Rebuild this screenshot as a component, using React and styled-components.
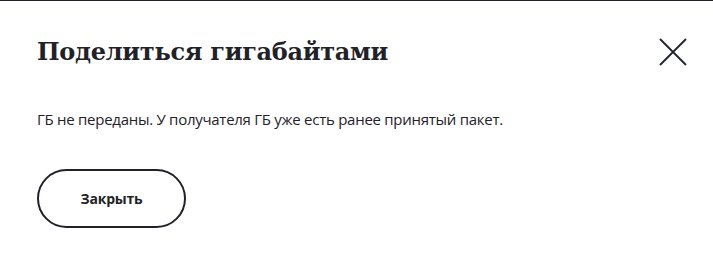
import styled, { createGlobalStyle } from "styled-components";

const GlobalStyle = createGlobalStyle`
  html, body {
    margin: 0;
    padding: 0;
    background: #ffffff;
  }
  body {
    font-family: "Open Sans", "Noto Sans", sans-serif;
    color: #1f2229;
  }
`;

const Modal = styled.div`
  box-sizing: border-box;
  width: 713px;
  height: 280px;
  border-top: 1px solid #1f2229;
  padding: 28px 24px 0 37px;
  background: #fff;
`;

const Header = styled.div`
  display: flex;
  align-items: flex-start;
  justify-content: space-between;
`;

const Title = styled.h2`
  margin: 8px 0 0;
  font-family: "DejaVu Serif", "Liberation Serif", serif;
  font-weight: 700;
  font-size: 24px;
  letter-spacing: -0.3px;
  line-height: 30px;
  color: #1f2229;
`;

const CloseButton = styled.button`
  display: flex;
  align-items: center;
  justify-content: center;
  width: 32px;
  height: 32px;
  margin-top: 7px;
  padding: 0;
  border: 0;
  background: none;
  cursor: pointer;
`;

const Message = styled.p`
  margin: 40px 0 0;
  font-size: 15px;
  letter-spacing: -0.27px;
  line-height: 22px;
  color: #1f2229;
`;

const Actions = styled.div`
  display: flex;
  margin-top: 39px;
`;

const PillButton = styled.button`
  box-sizing: border-box;
  width: 149px;
  height: 59px;
  border: 2px solid #1f2229;
  border-radius: 30px;
  background: #fff;
  font-family: "Open Sans", "Noto Sans", sans-serif;
  font-weight: 700;
  font-size: 14px;
  letter-spacing: -0.2px;
  color: #1f2229;
  cursor: pointer;
`;

export default function App() {
  return (
    <>
      <GlobalStyle />
      <Modal>
        <Header>
          <Title>Поделиться гигабайтами</Title>
          <CloseButton aria-label="Закрыть">
            <svg width="28" height="28" viewBox="0 0 28 28" fill="none">
              <path d="M1 1L27 27M27 1L1 27" stroke="#1f2229" strokeWidth="1.8" />
            </svg>
          </CloseButton>
        </Header>
        <Message>
          ГБ не переданы. У получателя ГБ уже есть ранее принятый пакет.
        </Message>
        <Actions>
          <PillButton>Закрыть</PillButton>
        </Actions>
      </Modal>
    </>
  );
}
